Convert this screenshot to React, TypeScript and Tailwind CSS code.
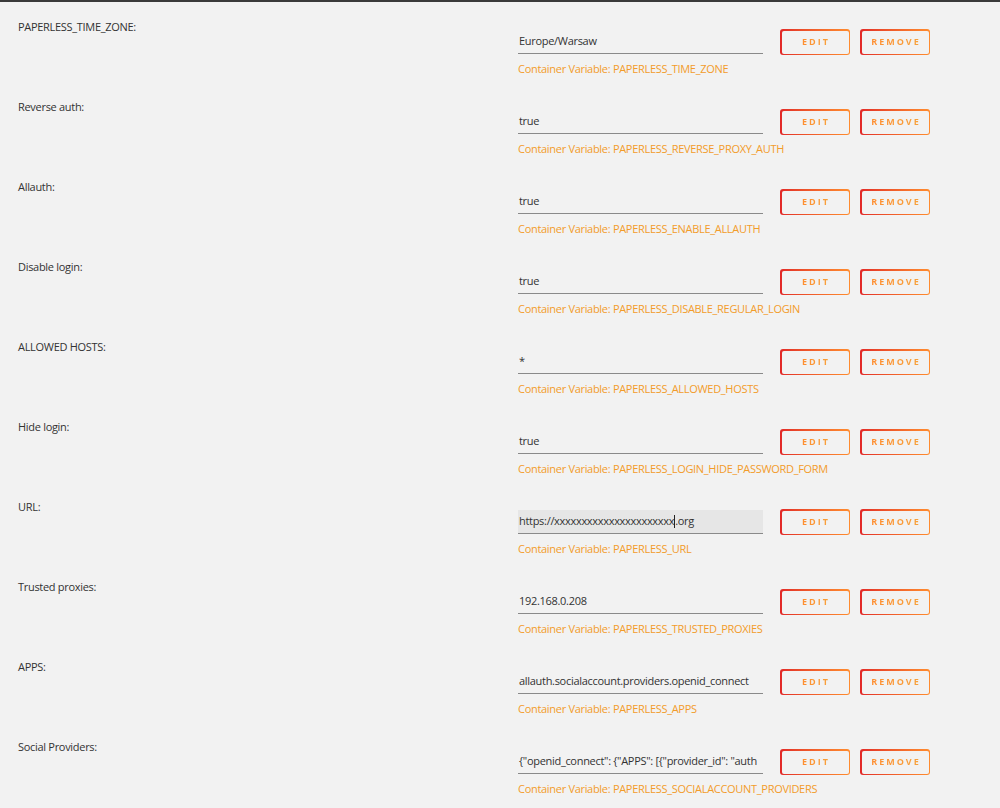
import React from 'react';

interface Row {
  label: string;
  value: string;
  variable: string;
  focused?: boolean;
}

const rows: Row[] = [
  { label: 'PAPERLESS_TIME_ZONE:', value: 'Europe/Warsaw', variable: 'PAPERLESS_TIME_ZONE' },
  { label: 'Reverse auth:', value: 'true', variable: 'PAPERLESS_REVERSE_PROXY_AUTH' },
  { label: 'Allauth:', value: 'true', variable: 'PAPERLESS_ENABLE_ALLAUTH' },
  { label: 'Disable login:', value: 'true', variable: 'PAPERLESS_DISABLE_REGULAR_LOGIN' },
  { label: 'ALLOWED HOSTS:', value: '*', variable: 'PAPERLESS_ALLOWED_HOSTS' },
  { label: 'Hide login:', value: 'true', variable: 'PAPERLESS_LOGIN_HIDE_PASSWORD_FORM' },
  { label: 'URL:', value: 'https://xxxxxxxxxxxxxxxxxxxxxx', variable: 'PAPERLESS_URL', focused: true },
  { label: 'Trusted proxies:', value: '192.168.0.208', variable: 'PAPERLESS_TRUSTED_PROXIES' },
  { label: 'APPS:', value: 'allauth.socialaccount.providers.openid_connect', variable: 'PAPERLESS_APPS' },
  {
    label: 'Social Providers:',
    value: '{"openid_connect": {"APPS": [{"provider_id": "auth',
    variable: 'PAPERLESS_SOCIALACCOUNT_PROVIDERS',
  },
];

const GradientButton: React.FC<{ text: string }> = ({ text }) => (
  <div className="w-[70px] h-[26px] rounded-[3px] p-[1.5px] bg-linear-to-r from-[#e22828] to-[#ff8c2f]">
    <div className="w-full h-full rounded-[2px] bg-[#f2f2f2] flex items-center justify-center">
      <span className="text-[9px] font-bold tracking-[2px] pl-[2px] bg-linear-to-r from-[#ff8c2f] to-[#f7a23c] bg-clip-text text-transparent">
        {text}
      </span>
    </div>
  </div>
);

export default function App() {
  return (
    <div
      className="w-[1000px] h-[808px] bg-[#f2f2f2] border-t-2 border-[#3a3a3a] overflow-hidden text-[#333] tracking-[-0.3px]"
      style={{ fontFamily: '"Open Sans", "Noto Sans", sans-serif' }}
    >
      {rows.map((row) => (
        <div key={row.variable} className="h-[80px] flex">
          <div className="w-[518px] pl-[18px] pt-[17px] text-[11px] leading-4">{row.label}</div>
          <div className="w-[245px] pt-[28px]">
            <div
              className={`h-[24px] flex items-center border-b-[1.5px] border-[#8a8a8a] overflow-hidden whitespace-nowrap text-[11px] ${
                row.focused ? 'bg-[#e6e6e6]' : ''
              }`}
            >
              <span className="pl-[1px]">{row.value}</span>
              {row.focused && (
                <>
                  <span className="inline-block w-px h-[13px] bg-[#222]" />
                  <span>.org</span>
                </>
              )}
            </div>
            <div className="mt-[7px] text-[11px] leading-4 text-[#f29c2b] whitespace-nowrap">
              Container Variable: {row.variable}
            </div>
          </div>
          <div className="pt-[27px] pl-[17px] flex gap-[10px]">
            <GradientButton text="EDIT" />
            <GradientButton text="REMOVE" />
          </div>
        </div>
      ))}
    </div>
  );
}
